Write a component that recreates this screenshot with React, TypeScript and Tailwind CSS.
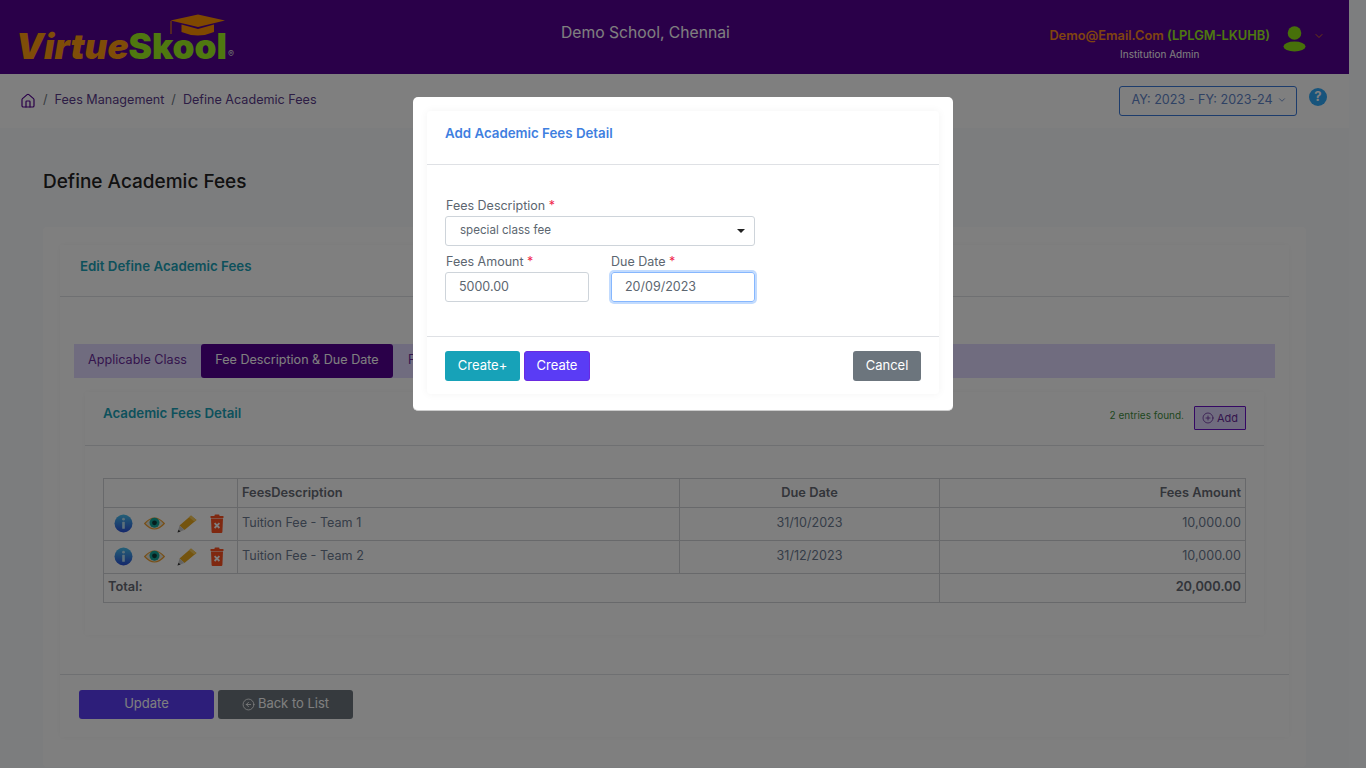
import React from 'react';
import {Home, ChevronDown, CirclePlus, CircleArrowLeft} from "lucide-react";

const rows = [
    {description: "Tuition Fee - Team 1", dueDate: "31/10/2023", amount: "10,000.00"},
    {description: "Tuition Fee - Team 2", dueDate: "31/12/2023", amount: "10,000.00"},
];

const Logo = () => (
    <div className="relative w-[222px] h-[60px]">
        <svg className="absolute left-[151px] top-[14px]" width="56" height="23" viewBox="0 0 56 23">
            <path d="M0.5 6.5 L28 0.5 L55 6.5 L28 13 Z" fill="#ff9000"/>
            <path d="M11.5 10.5 L28 15 L44 10.5 L44 18 Q28 25 11.5 18 Z" fill="#ff9000"/>
            <path d="M1 7 L1 20" stroke="#ff9000" strokeWidth="1"/>
        </svg>
        <div className="absolute left-[-3px] top-[26px] flex items-end leading-[40px] text-[35.2px] font-black italic font-['Inter',sans-serif]">
            <span className="text-[#ff9a10]">Virtue</span>
            <span className="text-[#9ef020] not-italic">Skool</span>
            <span className="text-[9px] not-italic font-normal text-[#dddddd] leading-[10px] mb-[7px] ml-[1px]">®</span>
        </div>
    </div>
);

const InfoIcon = () => (
    <svg width="19" height="19" viewBox="0 0 19 19">
        <defs>
            <linearGradient id="infoFill" x1="0" y1="0" x2="0" y2="1">
                <stop offset="0" stopColor="#48c0ee"/>
                <stop offset="1" stopColor="#2a50d8"/>
            </linearGradient>
        </defs>
        <circle cx="9.5" cy="9.5" r="9" fill="url(#infoFill)"/>
        <circle cx="9.5" cy="5.2" r="1.4" fill="#b8e0f5"/>
        <rect x="8.2" y="7.8" width="2.6" height="7" rx="0.6" fill="#b8e0f5"/>
    </svg>
);

const EyeIcon = () => (
    <svg width="21" height="15" viewBox="0 0 21 15">
        <path d="M0.7 7.5 Q10.5 -3.5 20.3 7.5 Q10.5 18.5 0.7 7.5 Z" fill="#e8e6da" stroke="#f0a030" strokeWidth="1.2"/>
        <circle cx="10.5" cy="6.8" r="5" fill="#12a89a"/>
        <circle cx="10.5" cy="6.8" r="2.4" fill="#0b3b3a"/>
    </svg>
);

const PencilIcon = () => (
    <svg width="20" height="18" viewBox="0 0 20 18">
        <path d="M14 0.5 L19.5 5 L7.5 15 L2.5 10.5 Z" fill="#e8a81f"/>
        <path d="M14 0.5 L19.5 5 L17.5 6.7 L12 2.2 Z" fill="#f4c95a"/>
        <path d="M2.5 10.5 L7.5 15 L0.5 17.5 Z" fill="#c9c9c9"/>
        <path d="M0.5 17.5 L1.5 14.8 L3.6 16.4 Z" fill="#333333"/>
    </svg>
);

const TrashIcon = () => (
    <svg width="14" height="19" viewBox="0 0 14 19">
        <rect x="4.5" y="0.5" width="5" height="2" rx="0.8" fill="#ff5020"/>
        <rect x="0.5" y="2" width="13" height="2" rx="0.6" fill="#ff5020"/>
        <path d="M1 4.5 H13 L12.4 18 Q12.3 19 11.4 19 H2.6 Q1.7 19 1.6 18 Z" fill="#ff5020"/>
        <path d="M4.6 9.2 L9.4 14 M9.4 9.2 L4.6 14" stroke="#ffffff" strokeWidth="1.8"/>
    </svg>
);

const RowIcons = () => (
    <div className="flex items-center h-[20px] pl-[10px]">
        <span className="w-[30px]"><InfoIcon/></span>
        <span className="w-[33px]"><EyeIcon/></span>
        <span className="w-[33px]"><PencilIcon/></span>
        <span><TrashIcon/></span>
    </div>
);

const Label = ({text}: {text: string}) => (
    <label className="block text-[12.5px] leading-[16px] text-[#5c6670]">
        {text} <span className="text-[#f0254a]">*</span>
    </label>
);

const App = () => {
    return (
        <div className="h-screen overflow-hidden flex bg-[#fbfcfe] font-['Inter',sans-serif]">
            <div className="w-[1349px] shrink-0 bg-[#f9fafc]">
                <header className="h-[74px] bg-[#540092] flex pl-[19px] pr-[24px]">
                    <Logo/>
                    <div className="pt-[23px] pl-[320px] whitespace-nowrap text-[15.7px] leading-[20px] text-white">
                        Demo School, Chennai
                    </div>
                    <div className="ml-auto flex items-start pt-[26px]">
                        <div className="flex flex-col items-center">
                            <div className="text-[12.8px] leading-[20px] font-semibold whitespace-nowrap">
                                <span className="text-[#ff8a1e]">Demo@Email.Com</span>{" "}
                                <span className="text-[#9ef020]">(LPLGM-LKUHB)</span>
                            </div>
                            <div className="text-[10px] leading-[14px] mt-[1px] text-white">Institution Admin</div>
                        </div>
                        <svg className="ml-[13px]" width="23" height="26" viewBox="0 0 23 26">
                            <circle cx="11.5" cy="7" r="6.8" fill="#8fe014"/>
                            <ellipse cx="11.5" cy="20.5" rx="11" ry="5" fill="#8fe014"/>
                        </svg>
                        <ChevronDown className="ml-[7px] mt-[4px] text-[#ff9000]" size={12} strokeWidth={1.6}/>
                    </div>
                </header>

                <div className="h-[54px] bg-white flex items-start pl-[20px] pr-[22px]">
                    <div className="flex items-center h-[18px] mt-[17px] text-[12.6px] text-[#5a3a8a]">
                        <Home size={16} strokeWidth={1.8} className="text-[#540092] mt-[2px]"/>
                        <span className="mx-[7px] text-[#6c757d]">/</span>
                        <span>Fees Management</span>
                        <span className="mx-[7px] text-[#6c757d]">/</span>
                        <span>Define Academic Fees</span>
                    </div>
                    <div className="ml-auto flex items-start">
                        <button className="mt-[12px] w-[178px] h-[30px] pb-[2px] pl-[2px] border border-[#3a78d8] rounded-[3px] flex items-center justify-center gap-[4px] text-[12.6px] text-[#5f84c8] bg-white">
                            AY: 2023 - FY: 2023-24 <ChevronDown size={10} strokeWidth={2}/>
                        </button>
                        <span className="ml-[12px] mt-[14px] w-[18px] h-[18px] rounded-full bg-[#2fa8f8] text-white text-[13px] font-bold flex items-center justify-center">?</span>
                    </div>
                </div>

                <main className="px-[43px] pt-[42px]">
                    <h1 className="text-[19px] leading-[24px] font-medium text-[#222222] mb-[33px]">Define Academic Fees</h1>
                    <div className="bg-white rounded-[4px] pt-[18px] px-[17px] pb-[30px] w-[1263px]">
                        <div className="bg-white shadow-[0_0_6px_rgba(0,0,0,0.04)] pb-[18px]">
                            <div className="h-[52px] pl-[20px] pt-[13px] border-b border-[#dfe1e5] text-[13.3px] leading-[16px] font-semibold text-[#1ba2b8]">
                                Edit Define Academic Fees
                            </div>
                            <div className="px-[14px] pt-[47px]">
                                <div className="w-[1201px] h-[34px] bg-[#e0d9ff] flex items-stretch text-[12.6px]">
                                    <div className="w-[127px] pb-[2px] flex items-center justify-center text-[#6a2a9a]">Applicable Class</div>
                                    <div className="w-[192px] pb-[2px] rounded-[3px] bg-[#540092] text-white flex items-center justify-center">Fee Description &amp; Due Date</div>
                                    <div className="pl-[15px] pb-[2px] flex items-center text-[#6a2a9a]">Fees</div>
                                </div>
                                <div className="mx-[11px] mt-[14px] shadow-[0_0_6px_rgba(0,0,0,0.04)] h-[243px]">
                                    <div className="h-[54px] pl-[18px] pr-[18px] border-b border-[#dfe1e5] flex items-start">
                                        <div className="mt-[13px] text-[13.3px] leading-[16px] font-semibold text-[#1ba2b8]">Academic Fees Detail</div>
                                        <div className="ml-auto mt-[17px] text-[10px] leading-[12px] text-[#3f8f3f]">2 entries found.</div>
                                        <button className="ml-[10px] mt-[14px] w-[52px] h-[24px] border border-[#6a10c8] rounded-[1px] bg-[#e0d9ff] flex items-center justify-center gap-[3px] text-[11px] text-[#6a2a9a]">
                                            <CirclePlus size={12} strokeWidth={1.6}/> Add
                                        </button>
                                    </div>
                                    <div className="px-[18px] pt-[32px]">
                                        <table className="w-[1142px] table-fixed border-collapse text-[12.6px] text-[#6c7a90]">
                                            <colgroup>
                                                <col className="w-[134px]"/>
                                                <col className="w-[442px]"/>
                                                <col className="w-[260px]"/>
                                                <col className="w-[306px]"/>
                                            </colgroup>
                                            <thead>
                                                <tr className="h-[28.5px] text-[12.8px] font-semibold text-[#666a74]">
                                                    <th className="border border-[#d0d2d6]"></th>
                                                    <th className="border border-[#d0d2d6] px-[4px] pb-[1px] text-left font-semibold">FeesDescription</th>
                                                    <th className="border border-[#d0d2d6] px-[4px] pb-[1px] text-center font-semibold">Due Date</th>
                                                    <th className="border border-[#d0d2d6] px-[4px] pb-[1px] text-right font-semibold">Fees Amount</th>
                                                </tr>
                                            </thead>
                                            <tbody>
                                                {rows.map((row, index) => {
                                                    return (
                                                        <tr className="h-[33px]" key={index}>
                                                            <td className="border border-[#d0d2d6]"><RowIcons/></td>
                                                            <td className="border border-[#d0d2d6] px-[4px]">{row.description}</td>
                                                            <td className="border border-[#d0d2d6] px-[4px] text-center">{row.dueDate}</td>
                                                            <td className="border border-[#d0d2d6] px-[4px] text-right">{row.amount}</td>
                                                        </tr>
                                                    );
                                                })}
                                                <tr className="h-[29px] text-[12.8px] font-semibold text-[#666a74]">
                                                    <td colSpan={3} className="border border-[#d0d2d6] px-[4px] pb-[1px]">Total:</td>
                                                    <td className="border border-[#d0d2d6] px-[4px] pb-[1px] text-right">20,000.00</td>
                                                </tr>
                                            </tbody>
                                        </table>
                                    </div>
                                </div>
                            </div>
                            <div className="mt-[39px] border-t border-[#dfe1e5] pl-[19px] pt-[15px] flex gap-[4px] text-[13px] text-white">
                                <button className="w-[135px] h-[29px] rounded-[3px] bg-[#5a3cf5] pb-[1px]">Update</button>
                                <button className="w-[135px] h-[29px] rounded-[3px] bg-[#6c757d] pb-[1px] flex items-center justify-center gap-[3px]">
                                    <CircleArrowLeft size={13} strokeWidth={1.5}/> Back to List
                                </button>
                            </div>
                        </div>
                    </div>
                </main>
            </div>
            <div className="flex-1 bg-[#fbfcfe]"></div>

            <div className="fixed inset-0 bg-black/50 flex justify-center items-start pt-[97px]">
                <div className="w-[540px] h-[314px] bg-white rounded-[5px] border-b border-[#cccccc] p-[14px] pb-[16px]">
                    <div className="h-[283px] rounded-[4px] shadow-[0_0_8px_rgba(0,0,0,0.05)] flex flex-col">
                        <div className="h-[54px] pl-[18px] pt-[14px] border-b border-[#dfe1e5] text-[13.3px] leading-[16px] font-semibold text-[#3f7fe0]">
                            Add Academic Fees Detail
                        </div>
                        <div className="h-[172px] pl-[18px] pt-[33px] border-b border-[#dfe1e5]">
                            <div className="pl-[1px]"><Label text="Fees Description"/></div>
                            <div className="relative w-[310px] h-[30px] mt-[2px]">
                                <select className="appearance-none w-full h-full pl-[14px] border border-[#ced4da] rounded-[3px] bg-white text-[11.6px] text-[#5c6670]" defaultValue="special class fee">
                                    <option>special class fee</option>
                                </select>
                                <span className="absolute right-[10px] top-[13px] border-x-[4px] border-x-transparent border-t-[4px] border-t-[#222222]"></span>
                            </div>
                            <div className="flex gap-[22px] mt-[8px]">
                                <div className="w-[144px]">
                                    <div className="pl-[1px]"><Label text="Fees Amount"/></div>
                                    <input readOnly value="5000.00" className="mt-[2px] w-full h-[30px] pl-[13px] pb-[1px] border border-[#ced4da] rounded-[3px] text-[12.5px] text-[#5c6670] outline-none"/>
                                </div>
                                <div className="w-[144px]">
                                    <Label text="Due Date"/>
                                    <input readOnly value="20/09/2023" className="mt-[2px] w-full h-[30px] pl-[13px] pb-[1px] border border-[#86b7fe] rounded-[3px] shadow-[0_0_0_2px_rgba(13,110,253,0.25)] text-[12.5px] text-[#5c6670] outline-none"/>
                                </div>
                            </div>
                        </div>
                        <div className="flex items-start px-[18px] pt-[14px] text-[13px] text-white">
                            <button className="w-[75px] h-[30px] rounded-[3px] bg-[#17a2b8]">Create+</button>
                            <button className="ml-[4px] w-[66px] h-[30px] rounded-[3px] bg-[#5a3cf5] border border-[#6a2ae0]">Create</button>
                            <button className="ml-auto w-[68px] h-[30px] rounded-[3px] bg-[#6c757d]">Cancel</button>
                        </div>
                    </div>
                </div>
            </div>
        </div>
    );
};

export default App;
